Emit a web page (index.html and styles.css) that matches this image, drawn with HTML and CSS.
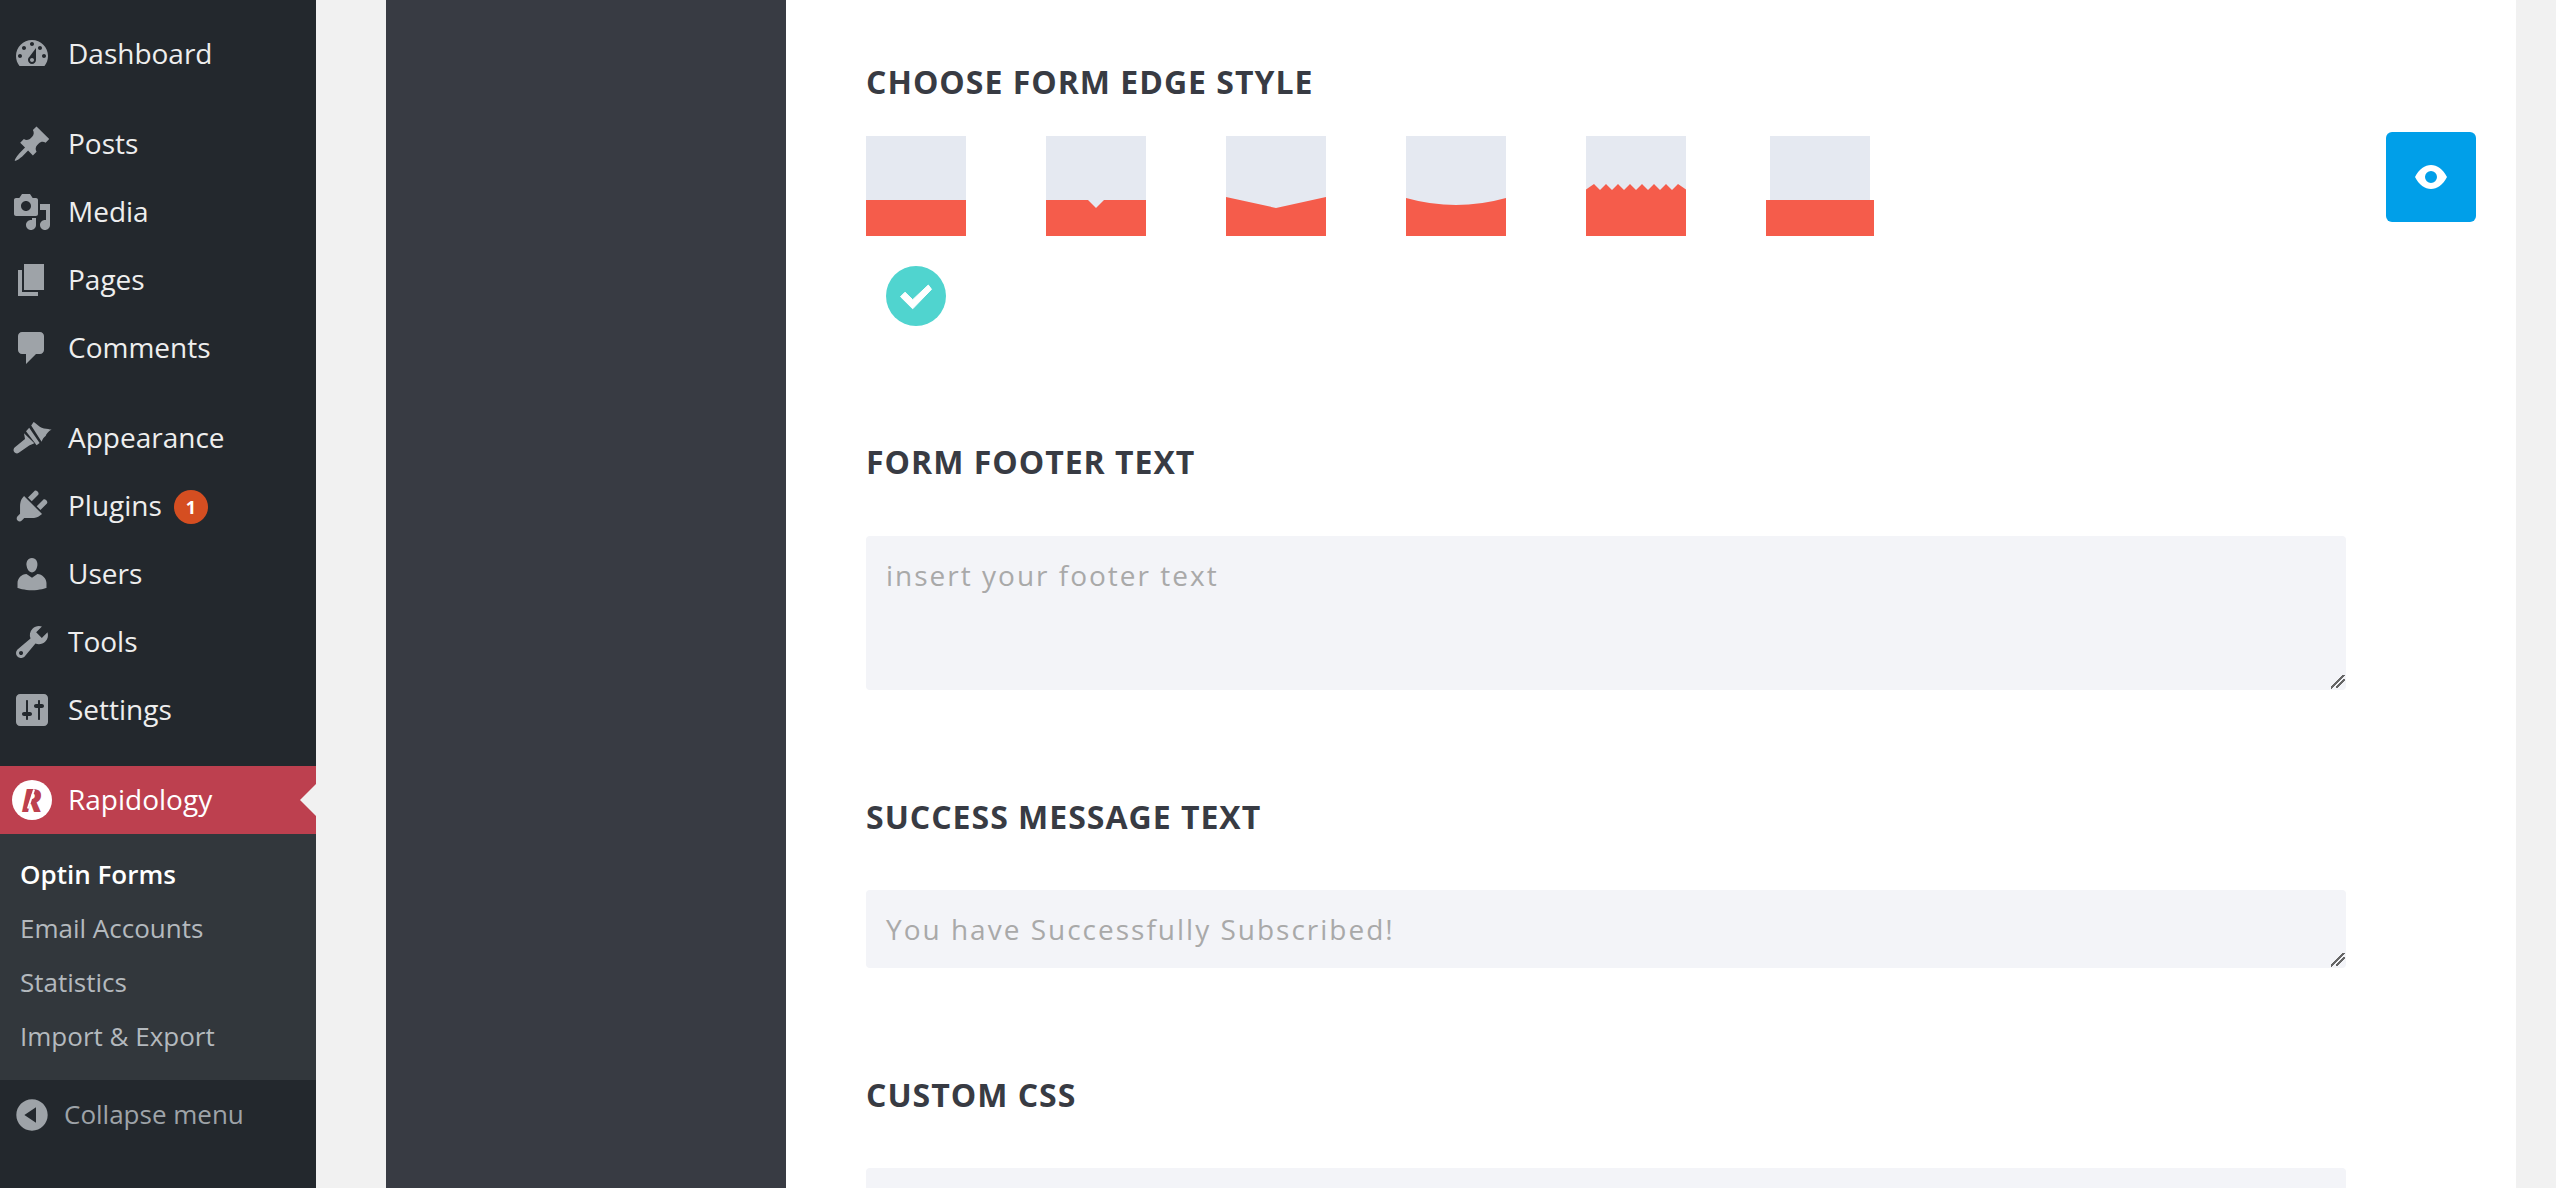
FILE: index.html
```html
<!DOCTYPE html>
<html>
<head>
<meta name="viewport" content="width=device-width, initial-scale=1">
<link rel="stylesheet" href="styles.css">
</head>
<body>

<div class="page">

  <!-- Admin menu -->
  <div class="sidebar">
    <ul class="menu">
      <li class="item"><svg class="icon" viewBox="0 0 20 20"><path fill-rule="evenodd" d="M3.76 16h12.48c1.1-1.37 1.76-3.11 1.76-5 0-4.42-3.58-8-8-8s-8 3.58-8 8c0 1.89.66 3.63 1.76 5zM10 4c.55 0 1 .45 1 1s-.45 1-1 1-1-.45-1-1 .45-1 1-1zM6 6c.55 0 1 .45 1 1s-.45 1-1 1-1-.45-1-1 .45-1 1-1zm8 0c.55 0 1 .45 1 1s-.45 1-1 1-1-.45-1-1 .45-1 1-1zm-5.37 5.55L12 7v6c0 1.1-.9 2-2 2s-2-.9-2-2c0-.57.24-1.08.63-1.45zM4 10c.55 0 1 .45 1 1s-.45 1-1 1-1-.45-1-1 .45-1 1-1zm12 0c.55 0 1 .45 1 1s-.45 1-1 1-1-.45-1-1 .45-1 1-1zm-5 3c0-.55-.45-1-1-1s-1 .45-1 1 .45 1 1 1 1-.45 1-1z"/></svg>Dashboard</li>
    </ul>
    <ul class="menu">
      <li class="item"><svg class="icon" viewBox="0 0 20 20"><path d="M10.44 3.02l1.82-1.82 6.36 6.35-1.83 1.82c-1.05-.68-2.48-.57-3.41.36l-.75.75c-.92.93-1.04 2.35-.35 3.41l-1.83 1.82-2.41-2.41-2.8 2.79c-.42.42-3.38 2.71-3.8 2.29s1.86-3.39 2.28-3.81l2.79-2.79L4.1 9.36l1.83-1.82c1.05.69 2.48.57 3.4-.36l.75-.75c.93-.92 1.05-2.35.36-3.41z"/></svg>Posts</li>
      <li class="item"><svg class="icon" viewBox="0 0 20 20"><path fill-rule="evenodd" d="M13 11V4c0-.55-.45-1-1-1h-1.67L9 1H5L3.67 3H2c-.55 0-1 .45-1 1v7c0 .55.45 1 1 1h10c.55 0 1-.45 1-1zM7 4.5c1.38 0 2.5 1.12 2.5 2.5S8.38 9.5 7 9.5 4.5 8.38 4.5 7 5.62 4.5 7 4.5zM14 6h5v10.5c0 1.38-1.12 2.5-2.5 2.5S14 17.88 14 16.5s1.12-2.5 2.5-2.5c.17 0 .34.02.5.05V9h-3V6zm-4 8.05V13h2v3.5c0 1.38-1.12 2.5-2.5 2.5S7 17.88 7 16.5 8.12 14 9.5 14c.17 0 .34.02.5.05z"/></svg>Media</li>
      <li class="item"><svg class="icon" viewBox="0 0 20 20"><path d="M6 15V2h10v13H6zm-1 1h8v2H3V5h2v11z"/></svg>Pages</li>
      <li class="item"><svg class="icon" viewBox="0 0 20 20"><path d="M5 2h9c1.1 0 2 .9 2 2v7c0 1.1-.9 2-2 2h-2l-5 5v-5H5c-1.1 0-2-.9-2-2V4c0-1.1.9-2 2-2z"/></svg>Comments</li>
    </ul>
    <ul class="menu">
      <li class="item"><svg class="icon" viewBox="0 0 20 20"><path d="M9.600 3.800L10.800 2C12.500 3 14 5 16 5.200 17.500 5.400 18.800 5.600 19.800 5.800 18 6.800 17.300 8 16.800 9 16 9.600 15.200 10.600 14.800 11.900zM8.600 4.900L13.800 12.500 12.300 13.600 7 6.600zM6 7.600L11.200 12.600 8.600 13.800 3.400 17.400C2.600 18 1.600 17.700 1.100 17 .6 16.300 .7 15.400 1.300 14.700L6.500 10.500z"/></svg>Appearance</li>
      <li class="item"><svg class="icon" viewBox="0 0 20 20"><path d="M13.11 4.36L9.87 7.6 8 5.73l3.24-3.24c.35-.34 1.05-.2 1.56.32.52.51.66 1.21.31 1.55zm-8 1.77l.91-1.12 9.01 9.01-1.19.84c-.71.71-2.63 1.16-3.82 1.16H6.14L4.9 17.26c-.59.59-1.54.59-2.12 0-.59-.58-.59-1.53 0-2.12l1.24-1.24v-3.88c0-1.13.4-3.19 1.09-3.89zm7.26 3.97l3.24-3.24c.34-.35 1.04-.21 1.55.31.52.51.66 1.21.31 1.55l-3.24 3.25z"/></svg>Plugins<span class="badge">1</span></li>
      <li class="item"><svg class="icon" viewBox="0 0 20 20"><path d="M10 9.25c-2.27 0-2.73-3.44-2.73-3.44C7 4.02 7.82 2 9.97 2c2.16 0 2.98 2.02 2.71 3.81 0 0-.41 3.44-2.68 3.44zm0 2.57L12.72 10c2.39 0 4.52 2.33 4.52 4.53v2.49s-3.65 1.13-7.24 1.13c-3.65 0-7.24-1.13-7.24-1.13v-2.49c0-2.25 1.94-4.48 4.47-4.48z"/></svg>Users</li>
      <li class="item"><svg class="icon" viewBox="0 0 20 20"><path fill-rule="evenodd" d="M16.68 9.77c-1.34 1.34-3.3 1.67-4.95.99l-5.41 6.52c-.99.99-2.59.99-3.58 0s-.99-2.59 0-3.57l6.52-5.42c-.68-1.65-.35-3.61.99-4.95 1.28-1.28 3.12-1.62 4.72-1.06l-2.89 2.89 2.82 2.82 2.86-2.87c.53 1.58.18 3.39-1.08 4.65zM3.81 16.21c.4.39 1.04.39 1.43 0 .4-.4.4-1.04 0-1.43-.39-.4-1.03-.4-1.43 0-.39.39-.39 1.03 0 1.43z"/></svg>Tools</li>
      <li class="item"><svg class="icon" viewBox="0 0 20 20"><path fill-rule="evenodd" d="M18 16V4c0-1.1-.9-2-2-2H4c-1.1 0-2 .9-2 2v12c0 1.1.9 2 2 2h12c1.1 0 2-.9 2-2zM8 11h1c.55 0 1 .45 1 1s-.45 1-1 1H8v1.500c0 .28-.22.5-.5.5s-.5-.22-.5-.5V13H6c-.55 0-1-.45-1-1s.45-1 1-1h1V5.500c0-.28.22-.5.5-.5s.5.22.5.5V11zm5-2h-1c-.55 0-1-.45-1-1s.45-1 1-1h1V5.500c0-.28.22-.5.5-.5s.5.22.5.5V7h1c.55 0 1 .45 1 1s-.45 1-1 1h-1v5.500c0 .28-.22.5-.5.5s-.5-.22-.5-.5V9z"/></svg>Settings</li>
    </ul>
    <div class="item active"><span class="logo">R</span>Rapidology</div>
    <ul class="submenu">
      <li class="current">Optin Forms</li>
      <li>Email Accounts</li>
      <li>Statistics</li>
      <li>Import &amp; Export</li>
    </ul>
    <div class="collapse"><svg class="icon" viewBox="0 0 20 20"><path fill-rule="evenodd" d="M10 2.160c4.330 0 7.840 3.510 7.840 7.840s-3.510 7.840-7.840 7.840S2.160 14.330 2.160 10 5.710 2.160 10 2.160zm2 11.720V6.120L6.180 9.970z"/></svg>Collapse menu</div>
  </div>

  <div class="panel"></div>

  <div class="content">
    <div class="form">
      <h2>Choose form edge style</h2>
      <div class="edges">
        <svg class="edge" viewBox="0 0 100 100"><rect class="sky" width="100" height="100"/><path class="ground" d="M0 64H100V100H0z"/></svg>
        <svg class="edge" viewBox="0 0 100 100"><rect class="sky" width="100" height="100"/><path class="ground" d="M0 64H42L50 72 58 64H100V100H0z"/></svg>
        <svg class="edge" viewBox="0 0 100 100"><rect class="sky" width="100" height="100"/><path class="ground" d="M0 61L50 72 100 61V100H0z"/></svg>
        <svg class="edge" viewBox="0 0 100 100"><rect class="sky" width="100" height="100"/><path class="ground" d="M0 62Q50 76 100 62V100H0z"/></svg>
        <svg class="edge" viewBox="0 0 100 100"><rect class="sky" width="100" height="100"/><path class="ground" d="M0 53.500L8 48 14 54 20 48 26 54 32 48 38 54 44 48 50 54 56 48 62 54 68 48 74 54 80 48 86 54 92 48 100 53.500V100H0z"/></svg>
        <svg class="edge wide" viewBox="0 0 108 100"><rect class="sky" x="4" width="100" height="100"/><path class="ground" d="M0 64H108V100H0z"/></svg>
      </div>
      <div class="check">
        <svg viewBox="0 0 60 60"><path d="M14.500 30.700L19 26.200 26.700 33.700 42.300 19 45.500 23.300 26.700 42.800z"/></svg>
      </div>

      <h2 class="after-check">Form footer text</h2>
      <textarea class="field tall" placeholder="insert your footer text"></textarea>

      <h2>Success message text</h2>
      <textarea class="field short" placeholder="You have Successfully Subscribed!"></textarea>

      <h2>Custom CSS</h2>
      <textarea class="field tall"></textarea>
    </div>

    <div class="preview">
      <svg viewBox="0 0 34 26"><path fill-rule="evenodd" d="M1 13C5 5 11 1 17 1s12 4 16 12c-4 8-10 12-16 12S5 21 1 13zm16 6a6 6 0 1 0 0-12 6 6 0 0 0 0 12z"/></svg>
    </div>
  </div>

</div>

</body>
</html>
```

FILE: styles.css
```css
* {
  box-sizing: border-box;
  font-family: "Open Sans", sans-serif;
}

html, body {
  margin: 0;
  height: 100%;
  overflow: hidden;
}

body {
  background: #f1f1f1;
}

.page {
  display: flex;
  height: 1188px;
  overflow: hidden;
}

/* Admin menu */
.sidebar {
  flex: 0 0 316px;
  padding-top: 20px;
  background: #23282d;
}

.menu,
.submenu {
  margin: 0;
  padding: 0;
  list-style-type: none;
}

.menu {
  margin-bottom: 22px;
}

.item {
  display: flex;
  align-items: center;
  height: 68px;
  padding: 0 0 2px 12px;
  color: #eee;
  font-size: 28px;
}

.icon {
  flex: none;
  width: 40px;
  height: 40px;
  margin: 2px 16px 0 0;
  fill: #9ea3a8;
}

.badge {
  width: 34px;
  height: 34px;
  margin: 4px 0 0 12px;
  border-radius: 50%;
  background: #d54e21;
  color: #fff;
  font-size: 18px;
  font-weight: 700;
  line-height: 34px;
  text-align: center;
}

.active {
  position: relative;
  background: #bd404f;
  color: #fff;
}

/* little arrow pointing at the page */
.active:after {
  content: "";
  position: absolute;
  top: 50%;
  right: 0;
  margin-top: -16px;
  border: 16px solid transparent;
  border-right-color: #f1f1f1;
  border-left-width: 0;
}

.logo {
  position: relative;
  flex: none;
  width: 40px;
  height: 40px;
  margin: 2px 16px 0 0;
  border-radius: 50%;
  background: #fff;
  color: #bd404f;
  font-size: 32px;
  font-style: italic;
  font-weight: 800;
  line-height: 40px;
  text-align: center;
}

/* the slash through the stem of the logo */
.logo:after {
  content: "";
  position: absolute;
  top: 9px;
  left: 18px;
  width: 2px;
  height: 20px;
  background: #fff;
  transform: rotate(18deg);
}

.submenu {
  height: 246px;
  padding-top: 13px;
  background: #32373c;
}

.submenu li {
  height: 54px;
  padding-left: 20px;
  color: #b4b9be;
  font-size: 26px;
  line-height: 54px;
}

.submenu .current {
  color: #fff;
  font-weight: 600;
}

.collapse {
  display: flex;
  align-items: center;
  height: 70px;
  padding: 0 0 2px 12px;
  color: #9ea3a8;
  font-size: 26px;
}

.collapse .icon {
  margin-right: 12px;
}

/* Dark column beside the form */
.panel {
  flex: 0 0 400px;
  margin-left: 70px;
  background: #383b43;
}

.content {
  display: flex;
  flex: 0 0 1730px;
  align-items: flex-start;
  padding: 62px 0 0 80px;
  background: #fff;
}

.form {
  flex: 0 0 1480px;
}

h2 {
  margin: 107px 0 53px;
  color: #383b43;
  font-size: 32px;
  font-weight: 700;
  letter-spacing: 1px;
  line-height: 40px;
  text-transform: uppercase;
}

h2:first-child {
  margin-top: 0;
  margin-bottom: 34px;
}

/* Edge style choices */
.edges {
  display: flex;
  gap: 80px;
}

.edge {
  display: block;
  width: 100px;
  height: 100px;
}

.edge.wide {
  width: 108px;
}

.sky {
  fill: #e5e9f1;
}

.ground {
  fill: #f55c4b;
}

.check {
  width: 60px;
  height: 60px;
  margin: 30px 0 0 20px;
  border-radius: 50%;
  background: #50d4cf;
}

.check svg {
  display: block;
  fill: #fff;
  stroke: #fff;
  stroke-linejoin: round;
}

h2.after-check {
  margin-top: 116px;
  margin-bottom: 54px;
}

.field {
  display: block;
  width: 100%;
  margin: 0;
  padding: 15px 20px;
  border: none;
  border-radius: 4px;
  background: #f3f4f8;
  font-size: 28px;
  letter-spacing: 2px;
  line-height: 48px;
  outline: none;
}

.field::placeholder {
  color: #a9a9a9;
  opacity: 1;
}

/* the two slanted lines of the resize grip */
.field::-webkit-resizer {
  background-image:
    linear-gradient(135deg, transparent 42%, #666 42%, #666 52%, transparent 52%),
    linear-gradient(135deg, transparent 42%, #666 42%, #666 58%, transparent 58%);
  background-position: 0 0, 5px 4px;
  background-repeat: no-repeat;
  background-size: 14px 14px, 9px 9px;
}

.tall {
  height: 154px;
}

.short {
  height: 78px;
}

/* Preview button */
.preview {
  display: flex;
  flex: none;
  align-items: center;
  justify-content: center;
  width: 90px;
  height: 90px;
  margin: 70px 0 0 40px;
  border-radius: 6px;
  background: #009fe9;
}

.preview svg {
  width: 34px;
  height: 26px;
  fill: #fff;
}
```
